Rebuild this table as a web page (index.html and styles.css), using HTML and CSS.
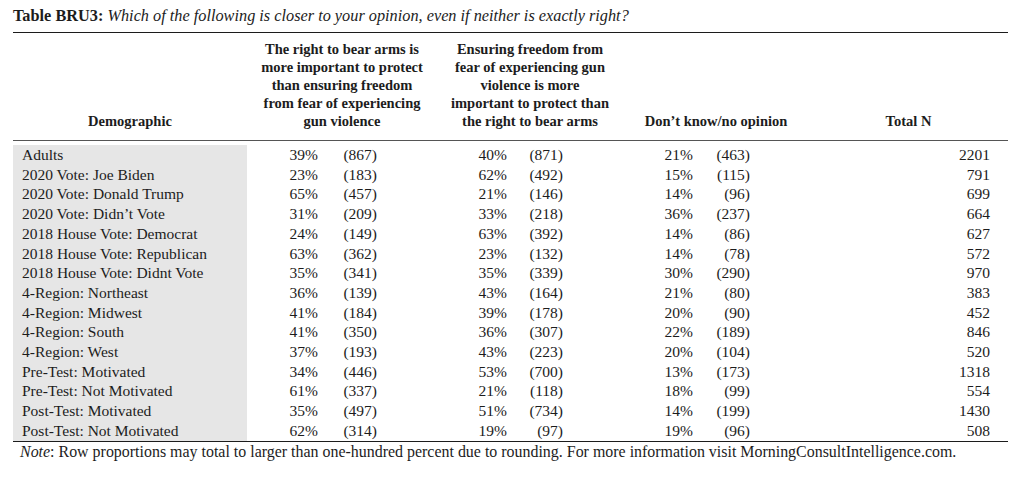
FILE: index.html
```html
<!DOCTYPE html>
<html lang="en">
<head>
<meta charset="utf-8">
<title>Table BRU3</title>
<link rel="stylesheet" href="styles.css">
</head>
<body>
<div class="page">
  <div class="title"><b>Table BRU3:</b> <i>Which of the following is closer to your opinion, even if neither is exactly right?</i></div>
  <div class="table">
    <div class="head">
      <div class="hc">Demographic</div>
      <div class="hc">The right to bear arms is<br>more important to protect<br>than ensuring freedom<br>from fear of experiencing<br>gun violence</div>
      <div class="hc">Ensuring freedom from<br>fear of experiencing gun<br>violence is more<br>important to protect than<br>the right to bear arms</div>
      <div class="hc">Don’t know/no opinion</div>
      <div class="hc">Total N</div>
    </div>
    <div class="body">
      <div class="d">Adults</div><div class="g g1"><span class="p">39%</span><span class="n">(867)</span></div><div class="g g2"><span class="p">40%</span><span class="n">(871)</span></div><div class="g g3"><span class="p">21%</span><span class="n">(463)</span></div><div class="t">2201</div>
      <div class="d">2020 Vote: Joe Biden</div><div class="g g1"><span class="p">23%</span><span class="n">(183)</span></div><div class="g g2"><span class="p">62%</span><span class="n">(492)</span></div><div class="g g3"><span class="p">15%</span><span class="n">(115)</span></div><div class="t">791</div>
      <div class="d">2020 Vote: Donald Trump</div><div class="g g1"><span class="p">65%</span><span class="n">(457)</span></div><div class="g g2"><span class="p">21%</span><span class="n">(146)</span></div><div class="g g3"><span class="p">14%</span><span class="n">(96)</span></div><div class="t">699</div>
      <div class="d">2020 Vote: Didn’t Vote</div><div class="g g1"><span class="p">31%</span><span class="n">(209)</span></div><div class="g g2"><span class="p">33%</span><span class="n">(218)</span></div><div class="g g3"><span class="p">36%</span><span class="n">(237)</span></div><div class="t">664</div>
      <div class="d">2018 House Vote: Democrat</div><div class="g g1"><span class="p">24%</span><span class="n">(149)</span></div><div class="g g2"><span class="p">63%</span><span class="n">(392)</span></div><div class="g g3"><span class="p">14%</span><span class="n">(86)</span></div><div class="t">627</div>
      <div class="d">2018 House Vote: Republican</div><div class="g g1"><span class="p">63%</span><span class="n">(362)</span></div><div class="g g2"><span class="p">23%</span><span class="n">(132)</span></div><div class="g g3"><span class="p">14%</span><span class="n">(78)</span></div><div class="t">572</div>
      <div class="d">2018 House Vote: Didnt Vote</div><div class="g g1"><span class="p">35%</span><span class="n">(341)</span></div><div class="g g2"><span class="p">35%</span><span class="n">(339)</span></div><div class="g g3"><span class="p">30%</span><span class="n">(290)</span></div><div class="t">970</div>
      <div class="d">4-Region: Northeast</div><div class="g g1"><span class="p">36%</span><span class="n">(139)</span></div><div class="g g2"><span class="p">43%</span><span class="n">(164)</span></div><div class="g g3"><span class="p">21%</span><span class="n">(80)</span></div><div class="t">383</div>
      <div class="d">4-Region: Midwest</div><div class="g g1"><span class="p">41%</span><span class="n">(184)</span></div><div class="g g2"><span class="p">39%</span><span class="n">(178)</span></div><div class="g g3"><span class="p">20%</span><span class="n">(90)</span></div><div class="t">452</div>
      <div class="d">4-Region: South</div><div class="g g1"><span class="p">41%</span><span class="n">(350)</span></div><div class="g g2"><span class="p">36%</span><span class="n">(307)</span></div><div class="g g3"><span class="p">22%</span><span class="n">(189)</span></div><div class="t">846</div>
      <div class="d">4-Region: West</div><div class="g g1"><span class="p">37%</span><span class="n">(193)</span></div><div class="g g2"><span class="p">43%</span><span class="n">(223)</span></div><div class="g g3"><span class="p">20%</span><span class="n">(104)</span></div><div class="t">520</div>
      <div class="d">Pre-Test: Motivated</div><div class="g g1"><span class="p">34%</span><span class="n">(446)</span></div><div class="g g2"><span class="p">53%</span><span class="n">(700)</span></div><div class="g g3"><span class="p">13%</span><span class="n">(173)</span></div><div class="t">1318</div>
      <div class="d">Pre-Test: Not Motivated</div><div class="g g1"><span class="p">61%</span><span class="n">(337)</span></div><div class="g g2"><span class="p">21%</span><span class="n">(118)</span></div><div class="g g3"><span class="p">18%</span><span class="n">(99)</span></div><div class="t">554</div>
      <div class="d">Post-Test: Motivated</div><div class="g g1"><span class="p">35%</span><span class="n">(497)</span></div><div class="g g2"><span class="p">51%</span><span class="n">(734)</span></div><div class="g g3"><span class="p">14%</span><span class="n">(199)</span></div><div class="t">1430</div>
      <div class="d">Post-Test: Not Motivated</div><div class="g g1"><span class="p">62%</span><span class="n">(314)</span></div><div class="g g2"><span class="p">19%</span><span class="n">(97)</span></div><div class="g g3"><span class="p">19%</span><span class="n">(96)</span></div><div class="t">508</div>
    </div>
  </div>
  <div class="note"><i>Note</i>: Row proportions may total to larger than one-hundred percent due to rounding. For more information visit MorningConsultIntelligence.com.</div>
</div>
</body>
</html>
```

FILE: styles.css
```css
html, body {
  margin: 0;
  padding: 0;
  background: #ffffff;
}

body {
  font-family: "Liberation Serif", "Times New Roman", serif;
  color: #1c1c1c;
}

.page {
  width: 995px;
  padding-left: 13px;
}

.title {
  font-size: 16.3px;
  line-height: 20px;
  padding-top: 6px;
  padding-bottom: 6px;
  white-space: nowrap;
}

.table {
  border-top: 1.5px solid #1c1c1c;
  border-bottom: 1.5px solid #1c1c1c;
}

.head,
.body {
  display: grid;
  grid-template-columns: 234px 190px 186px 186px 199px;
}

.head {
  padding-top: 7px;
  border-bottom: 1px solid #555555;
}

.hc {
  align-self: end;
  text-align: center;
  font-weight: bold;
  font-size: 14.5px;
  line-height: 18px;
  padding-bottom: 10px;
  white-space: nowrap;
}

.body {
  margin-top: 4px;
  font-size: 15.5px;
  line-height: 19.7px;
}

.d {
  background: #e6e6e6;
  padding-left: 9px;
  white-space: nowrap;
}

.g {
  display: flex;
  white-space: nowrap;
}

.g .p,
.g .n {
  display: block;
  text-align: right;
}

.g1 .p { width: 71px; }
.g1 .n { width: 59px; }
.g2 .p { width: 70px; }
.g2 .n { width: 56px; }
.g3 .p { width: 70px; }
.g3 .n { width: 57px; }

.t {
  text-align: right;
  padding-right: 18px;
}

.note {
  font-size: 15.95px;
  line-height: 20px;
  padding-left: 7px;
  white-space: nowrap;
}
```
